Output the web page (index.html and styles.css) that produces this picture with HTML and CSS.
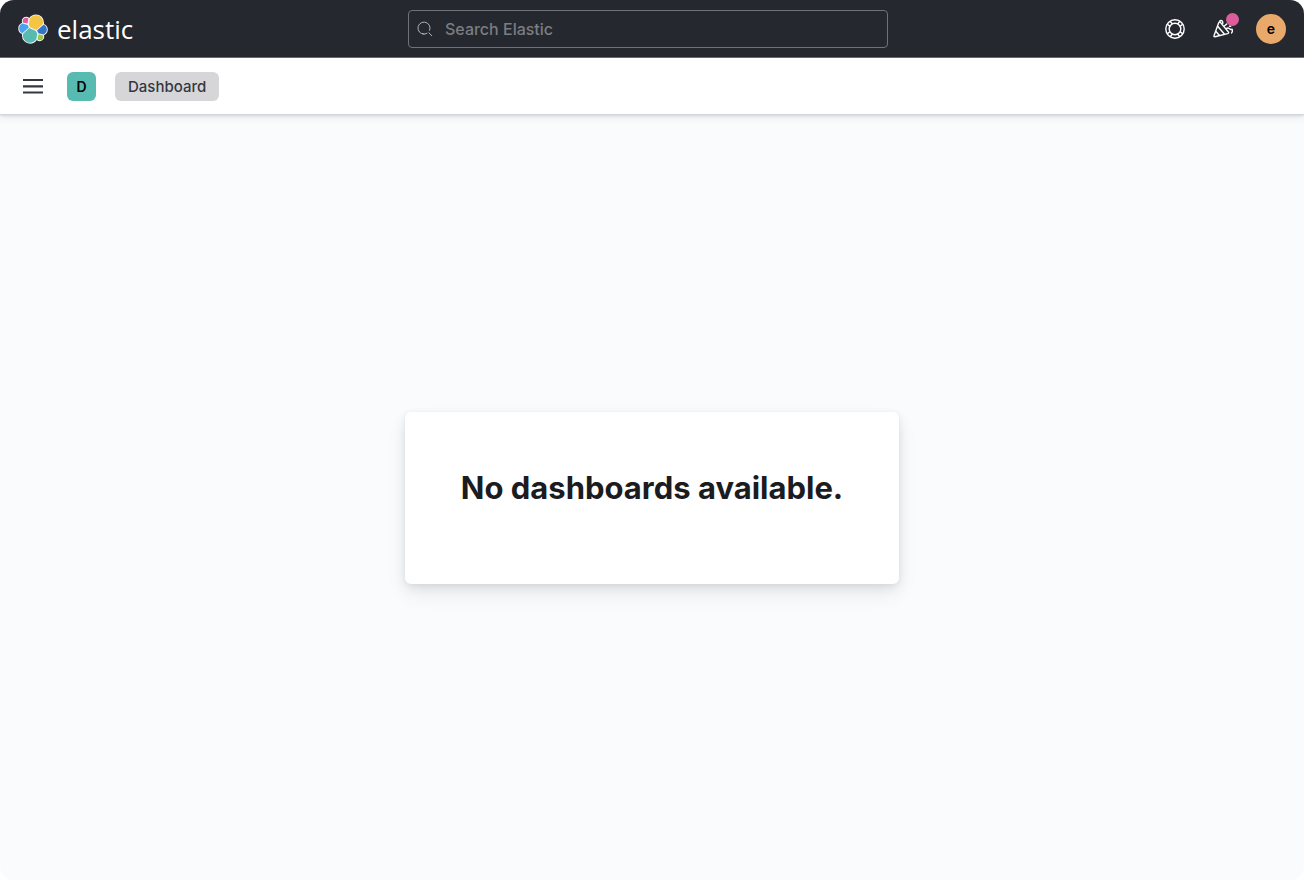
FILE: index.html
```html
<!DOCTYPE html>
<html lang="en">
<head>
<meta charset="utf-8">
<title>Dashboard - Elastic</title>
<link rel="stylesheet" href="styles.css">
</head>
<body>
<div class="app">
  <header class="topbar">
    <a class="brand" href="#">
      <svg class="brand-mark" viewBox="0 0 32 32" aria-hidden="true">
        <defs>
          <g id="cluster">
            <path fill="#f4c543" d="M12.58 13.787l7.002 3.211 7.066-6.213a7.849 7.849 0 0 0 .152-1.557c0-4.287-3.464-7.787-7.723-7.787-2.549 0-4.92 1.264-6.359 3.387L11.54 10.94z"/>
            <path fill="#57bbb2" d="M5.333 21.228A8.013 8.013 0 0 0 5.18 22.8c0 4.3 3.486 7.8 7.773 7.8 2.581 0 4.975-1.28 6.42-3.424l1.165-6.101-1.556-2.987-7.03-3.214z"/>
            <path fill="#df5c9c" d="M5.29 9.083l4.799 1.137 1.05-5.474a3.86 3.86 0 0 0-2.33-.79A3.813 3.813 0 0 0 5 7.777c0 .446.1.9.29 1.306z"/>
            <path fill="#4aa2ee" d="M4.873 10.23A5.434 5.434 0 0 0 1.246 15.4a5.48 5.48 0 0 0 3.516 5.104l6.733-6.108-1.236-2.652z"/>
            <path fill="#9bc93f" d="M20.87 27.184a3.8 3.8 0 0 0 2.317.794 3.81 3.81 0 0 0 3.802-3.815c0-.463-.083-.907-.244-1.32l-4.795-1.125z"/>
            <path fill="#3274c5" d="M21.848 20.563l5.28 1.236a5.436 5.436 0 0 0 3.627-5.169 5.47 5.47 0 0 0-3.51-5.092l-6.905 6.068z"/>
          </g>
        </defs>
        <use href="#cluster" stroke="#f2f4f6" stroke-width="2" stroke-linejoin="round"/>
        <use href="#cluster"/>
      </svg>
      <span class="brand-name">elastic</span>
    </a>
    <label class="search">
      <svg class="search-icon" viewBox="0 0 16 16" aria-hidden="true">
        <path d="M10.300 12.100A6 6 0 1 1 12.400 9.700M11.700 11.500l3.300 3.600M5 12.500a6 6 0 0 0 2.500.5" fill="none" stroke="#b0b2b6"/>
      </svg>
      <input class="search-input" type="search" placeholder="Search Elastic" aria-label="Search Elastic">
    </label>
    <div class="actions">
      <button class="icon-button" type="button" aria-label="Help">
        <svg class="icon" viewBox="0 0 20 20" fill="none" stroke="#fff" aria-hidden="true">
          <circle cx="10" cy="10" r="9.200" stroke-width="1.400"/>
          <circle cx="10" cy="10" r="5.800" stroke-width="1.400"/>
          <path stroke-width="1.400" d="M5.200 2.300l2.200 2.700M2.300 5.200l2.700 2.200M14.800 2.300l-2.200 2.700M17.700 5.200l-2.700 2.200M5.200 17.700l2.200-2.700M2.300 14.800l2.700-2.200M14.800 17.700l-2.200-2.700M17.700 14.800l-2.700-2.200"/>
        </svg>
      </button>
      <button class="icon-button" type="button" aria-label="What's new">
        <svg class="icon" viewBox="0 0 20 20" fill="none" stroke="#fff" stroke-width="1.400" stroke-linecap="round" stroke-linejoin="round" aria-hidden="true">
          <path d="M5.600 4L1 16.700q-.3 1.300 1 1L14.700 14.600q1.600-.6.500-1.800L7.600 3.600Q6.300 2.300 5.600 4zM4.700 7.200l6.800 8M2.800 12.300l3.700 4.200M7 1.700q3-.8 2.800 2.500M11 7.200l2.800-2.200M13 10q1.800-1.800 3.200-.4t2.800.6q1 1.800-.4 3.700M16.500 7.300h1.200"/>
        </svg>
        <span class="dot"></span>
      </button>
      <button class="avatar" type="button" aria-label="Account menu for elastic">e</button>
    </div>
  </header>
  <nav class="navbar" aria-label="Breadcrumbs">
    <button class="menu-button" type="button" aria-label="Toggle navigation">
      <svg class="icon" viewBox="0 0 20 20" aria-hidden="true"><path d="M0 4h20M0 10.300h20M0 16.500h20" stroke="#343741" stroke-width="2.200"/></svg>
    </button>
    <button class="space" type="button" aria-label="Default space">D</button>
    <a class="crumb" href="#" aria-current="page">Dashboard</a>
  </nav>
  <main class="content">
    <section class="panel">
      <h1 class="panel-title">No dashboards available.</h1>
    </section>
  </main>
</div>
</body>
</html>
```
FILE: styles.css
```css
* { box-sizing: border-box; }
body {
  margin: 0;
  background: #fff;
  color: #343741;
  font-family: Inter, "Liberation Sans", sans-serif;
}
button { border: 0; padding: 0; background: none; font: inherit; color: inherit; cursor: pointer; }
a { color: inherit; text-decoration: none; }
.app {
  display: flex;
  flex-direction: column;
  min-height: 100vh;
  border-radius: 14px;
  overflow: hidden;
  background: #fafbfd;
}
.topbar {
  display: grid;
  grid-template-columns: 1fr minmax(0, 480px) 1fr;
  align-items: center;
  height: 58px;
  padding: 0 18px;
  background: #25282f;
  border-bottom: 1px solid #69707d;
}
.brand { display: flex; align-items: center; gap: 9px; }
.brand-mark { width: 30px; height: 30px; }
.brand-name {
  font-family: "Open Sans", "Noto Sans", sans-serif;
  font-size: 26px;
  font-weight: 400;
  line-height: 30px;
  color: #fff;
}
.search {
  display: flex;
  align-items: center;
  gap: 12px;
  height: 38px;
  margin-left: -4px;
  margin-right: 4px;
  padding: 0 8px;
  border: 1px solid #707277;
  border-radius: 4px;
}
.search-icon { flex: none; width: 16px; height: 16px; }
.search-input {
  flex: 1;
  min-width: 0;
  padding: 0;
  border: 0;
  outline: 0;
  background: none;
  color: #fff;
  font: 500 16px/24px Inter, "Liberation Sans", sans-serif;
}
.search-input::placeholder { color: #7b7d82; opacity: 1; }
.actions { display: flex; justify-content: flex-end; align-items: center; gap: 18px; }
.icon-button { position: relative; display: flex; align-items: center; justify-content: center; width: 30px; height: 30px; }
.icon { display: block; width: 20px; height: 20px; }
.dot { position: absolute; top: -1px; right: -1px; width: 13px; height: 13px; border-radius: 50%; background: #df5c9c; }
.avatar {
  width: 30px;
  height: 30px;
  border-radius: 50%;
  background: #e9a96b;
  color: #000;
  font-size: 14px;
  font-weight: 600;
}
.navbar {
  z-index: 1;
  display: flex;
  align-items: center;
  height: 57px;
  padding: 0 18px;
  background: #fff;
  border-bottom: 1px solid #d0d5e0;
  box-shadow: 0 1px 3px rgba(0, 0, 0, .12), 0 3px 8px rgba(0, 0, 0, .06);
}
.menu-button { display: flex; align-items: center; justify-content: center; width: 30px; height: 30px; }
.space {
  width: 29px;
  height: 29px;
  margin: 0 19px;
  border-radius: 6px;
  background: #57bbb2;
  color: #000;
  font-size: 14px;
  font-weight: 600;
}
.crumb {
  padding: 0 13px;
  border-radius: 6px;
  background: #d6d6d8;
  color: #343741;
  font-size: 15px;
  font-weight: 500;
  line-height: 29px;
}
.content { flex: 1; display: flex; align-items: center; justify-content: center; }
.panel {
  padding: 58px 56px 78px;
  border-radius: 6px;
  background: #fff;
  box-shadow: 0 1px 6px rgba(0, 0, 0, .05), 0 4px 12px rgba(0, 0, 0, .06), 0 10px 20px rgba(0, 0, 0, .07);
}
.panel-title { margin: 0; font-size: 31px; font-weight: 700; line-height: 36px; color: #1a1c21; }
```
